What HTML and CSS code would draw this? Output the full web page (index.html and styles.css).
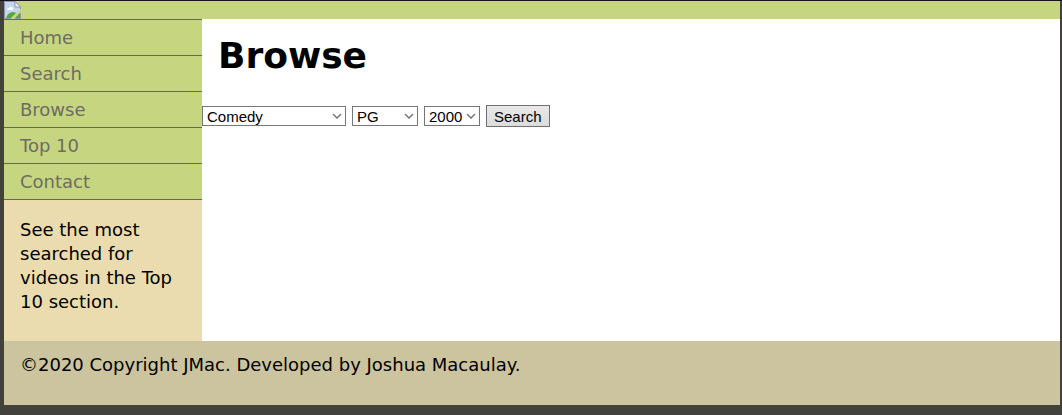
FILE: index.html
```html
<!DOCTYPE html>
<html lang="en">
<head>
<meta charset="utf-8">
<title>Browse</title>
<link rel="stylesheet" href="styles.css">
</head>
<body>
<div class="page">
  <header class="banner">
    <svg class="logo" width="17" height="18" viewBox="0 0 17 18" aria-hidden="true">
      <path d="M1 1H11L16 6V9L7 17H1Z" fill="#c3d6f4"/>
      <path d="M3 9Q3 7 5 7Q6 5 8 6Q10 7 9 9Z" fill="#fff"/>
      <path d="M2 17Q4 11 9 11Q11 11 12 12L7 17Z" fill="#56a936"/>
      <path d="M11 17L16 12V17Z" fill="#56a936"/>
      <path d="M7 17.500H0.500V0.500H11L16.500 6V8M16.500 12V17.500H11" fill="none" stroke="#9295ad"/>
      <path d="M11 0.500V6H16.500Z" fill="#f4f6fb" stroke="#9295ad"/>
    </svg>
  </header>
  <div class="columns">
    <aside class="sidebar">
      <nav class="menu">
        <a href="#">Home</a>
        <a href="#">Search</a>
        <a href="#">Browse</a>
        <a href="#">Top 10</a>
        <a href="#">Contact</a>
      </nav>
      <p class="note">See the most searched for videos in the Top 10 section.</p>
    </aside>
    <main class="content">
      <h1 class="title">Browse</h1>
      <form class="filters">
        <span class="picker genre">
          <select aria-label="Genre"><option>Comedy</option></select>
          <svg class="arrow" width="10" height="6" viewBox="0 0 10 6" aria-hidden="true"><path d="M1 1L5 5L9 1"/></svg>
        </span>
        <span class="picker rating">
          <select aria-label="Rating"><option>PG</option></select>
          <svg class="arrow" width="10" height="6" viewBox="0 0 10 6" aria-hidden="true"><path d="M1 1L5 5L9 1"/></svg>
        </span>
        <span class="picker year">
          <select aria-label="Year"><option>2000</option></select>
          <svg class="arrow" width="10" height="6" viewBox="0 0 10 6" aria-hidden="true"><path d="M1 1L5 5L9 1"/></svg>
        </span>
        <button class="submit" type="button">Search</button>
      </form>
    </main>
  </div>
  <footer class="footer">©2020 Copyright JMac. Developed by Joshua Macaulay.</footer>
</div>
</body>
</html>
```
FILE: styles.css
```css
* {
  box-sizing: border-box;
}

body {
  margin: 0;
  padding: 0 2px 10px 4px;
  border-top: 1px solid #1b111c;
  background: #43413c;
  color: #000;
  font-family: Verdana, "DejaVu Sans", sans-serif;
  font-size: 18px;
  line-height: 24px;
}

.page {
  background: #fff;
}

.banner {
  background: #c6d580;
}

.logo {
  display: block;
}

.columns {
  display: flex;
}

.sidebar {
  flex: 0 0 198px;
  padding-bottom: 27px;
  background: #eadcae;
}

.menu {
  border-top: 1px solid #666;
}

.menu a {
  display: block;
  padding: 6px 16px 5px;
  border-bottom: 1px solid #666;
  background: #c6d580;
  color: #6e6c64;
  text-decoration: none;
}

.note {
  margin: 0;
  padding: 18px 16px 0;
}

.content {
  flex: 1;
}

.title {
  margin: 0;
  padding: 16px 16px 28px;
  font-size: 36px;
  line-height: 42px;
}

.filters {
  display: flex;
  align-items: center;
  gap: 6px;
}

.picker {
  display: grid;
  align-items: center;
}

.picker select,
.picker .arrow {
  grid-area: 1 / 1;
}

.picker select {
  width: 100%;
  height: 20px;
  padding: 0 4px;
  border: 1px solid #767676;
  border-radius: 0;
  appearance: none;
  background: #fff;
  color: #000;
  font: 15px "Liberation Sans", Arial, sans-serif;
}

.arrow {
  justify-self: end;
  margin-right: 4px;
  fill: none;
  stroke: #777;
  stroke-width: 1.5;
  pointer-events: none;
}

.genre {
  width: 144px;
}

.rating {
  width: 66px;
}

.year {
  width: 56px;
}

.submit {
  height: 22px;
  padding: 0 7px;
  border: 1px solid #707070;
  border-radius: 0;
  background: linear-gradient(#e9e9e9, #dcdcdc);
  color: #000;
  font: 15px "Liberation Sans", Arial, sans-serif;
}

.footer {
  padding: 12px 16px 28px;
  background: #ccc49f;
}
```
